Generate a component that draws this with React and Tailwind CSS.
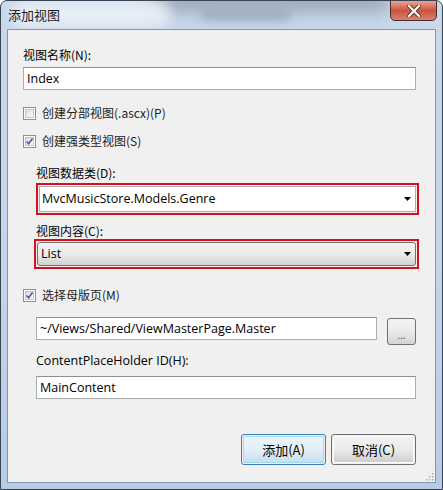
import React from "react";

const latin = { fontFamily: '"Open Sans", "Noto Sans CJK SC", sans-serif' };
const cjk = { fontFamily: '"Noto Sans CJK SC", "Open Sans", sans-serif' };

function Checkbox({ checked }) {
  return (
    <div className="w-[13px] h-[13px] border border-[#8f8f8f] bg-white p-[1px] shrink-0">
      <div className="w-full h-full border border-[#c6c6c6] bg-gradient-to-br from-[#dcdcdc] to-[#fbfbfb] relative">
        {checked && (
          <svg viewBox="0 0 9 9" className="absolute left-[-1px] top-[-1px] w-[9px] h-[9px]">
            <path d="M1.5 4.5 L3.6 6.8 L7.6 1.6" stroke="#4a5e95" strokeWidth="1.6" fill="none" />
          </svg>
        )}
      </div>
    </div>
  );
}

function Arrow() {
  return (
    <svg viewBox="0 0 7 4" className="w-[7px] h-[4px]">
      <path d="M0 0 H7 L3.5 4 Z" fill="#000" />
    </svg>
  );
}

function Button({ children, primary }) {
  return (
    <div
      className={
        "w-[85px] h-[31px] rounded-[3px] border p-[1px] " +
        (primary ? "border-[#3c7fb1]" : "border-[#707070]")
      }
    >
      <div
        className={
          "w-full h-full rounded-[2px] flex items-center justify-center text-[13px] leading-[16px] text-black " +
          (primary
            ? "bg-gradient-to-b from-[#eaf6fd] via-[#e3eef7] to-[#c8dff0] border border-[#a6d7f3]"
            : "bg-gradient-to-b from-[#f2f2f2] via-[#ebebeb] to-[#cfcfcf] border border-[#fcfcfc]")
        }
        style={cjk}
      >
        {children}
      </div>
    </div>
  );
}

export default function App() {
  return (
    <div className="w-[443px] h-[490px] relative overflow-hidden rounded-t-[7px] border border-[#3a4450] bg-gradient-to-b from-[#c9d9ea] via-[#c4d6eb] to-[#b6cce6] flex flex-col leading-[16px]">
      {/* aero blur hints */}
      <div className="absolute left-[150px] top-[-14px] w-[240px] h-[26px] rounded-full bg-[#5b6b7d] opacity-40 blur-[8px]" />
      <div className="absolute left-[10px] top-[0px] w-[160px] h-[26px] rounded-full bg-[#eef3f8] opacity-80 blur-[6px]" />
      <div className="absolute left-[200px] top-[10px] w-[90px] h-[10px] rounded-full bg-[#8596aa] opacity-50 blur-[4px]" />

      {/* title bar */}
      <div className="relative h-[28px] flex items-start justify-between shrink-0">
        <div className="pl-[7px] pt-[5px] text-[13px] text-[#1a1a1a] leading-[18px]" style={cjk}>
          添加视图
        </div>
        <div className="mr-[5px] mt-[-1px] w-[47px] h-[21px] rounded-b-[5px] border border-[#4a2d28] bg-gradient-to-b from-[#e8a495] via-[#c9533f] to-[#d9806e] flex items-center justify-center">
          <svg viewBox="0 0 14 12" className="w-[14px] h-[12px]">
            <path d="M2 1 L12 11 M12 1 L2 11" stroke="#5a2a22" strokeWidth="4" strokeLinecap="square" />
            <path d="M2 1 L12 11 M12 1 L2 11" stroke="#ffffff" strokeWidth="2.2" strokeLinecap="square" />
          </svg>
        </div>
      </div>

      {/* client area */}
      <div className="relative mx-[6px] mb-[6px] flex-1 border border-[#8496ad] bg-[#f0f0f0] flex flex-col pl-[15px] pr-[19px] text-[12px] leading-[16px] text-black" style={cjk}>
        <div className="mt-[17px] h-[16px]">视图名称(N):</div>
        <div className="mt-[4px] h-[23px] border border-[#abadb3] border-t-[#8e8f8f] bg-white flex items-center pl-[3px] text-[12.5px]" style={latin}>
          Index
        </div>

        <div className="mt-[15px] flex items-center h-[16px]">
          <Checkbox />
          <span className="ml-[6px] text-[#222]">创建分部视图(.ascx)(P)</span>
        </div>
        <div className="mt-[12px] flex items-center h-[16px]">
          <Checkbox checked />
          <span className="ml-[6px] text-[#222]">创建强类型视图(S)</span>
        </div>

        <div className="pl-[13px] flex flex-col">
          <div className="mt-[16px] h-[16px]">视图数据类(D):</div>
          <div className="mt-[2px] mr-[-3px] h-[32px] border-2 border-[#d6101c] p-[1px]">
            <div className="h-full border border-[#abadb3] bg-white flex items-center justify-between pl-[2px] pr-[4px] text-[12.5px]" style={latin}>
              <span>MvcMusicStore.Models.Genre</span>
              <Arrow />
            </div>
          </div>

          <div className="mt-[8px] h-[16px]">视图内容(C):</div>
          <div className="mt-[0px] ml-[-2px] mr-[-3px] h-[30px] border-2 border-[#d6101c] p-[1px] pl-[1px]">
            <div className="h-full rounded-[3px] border border-[#707070] bg-gradient-to-b from-[#f2f2f2] via-[#ebebeb] to-[#d3d3d3] flex items-center justify-between pl-[3px] pr-[4px] text-[12.5px]" style={latin}>
              <span>List</span>
              <Arrow />
            </div>
          </div>
        </div>

        <div className="mt-[18px] flex items-center h-[16px]">
          <Checkbox checked />
          <span className="ml-[6px] text-[#222]">选择母版页(M)</span>
        </div>

        <div className="pl-[13px] flex flex-col">
          <div className="mt-[14px] h-[23px] flex items-start gap-[10px]">
            <div className="flex-1 h-[23px] border border-[#abadb3] border-t-[#8e8f8f] bg-white flex items-center pl-[3px] text-[12.5px]" style={latin}>
              ~/Views/Shared/ViewMasterPage.Master
            </div>
            <div className="w-[29px] h-[27px] shrink-0 mt-[1px] rounded-[3px] border border-[#707070] bg-gradient-to-b from-[#f2f2f2] via-[#ebebeb] to-[#d3d3d3] flex items-end justify-center pb-[4px] text-[10px] leading-[10px] text-[#444]" style={latin}>
              ...
            </div>
          </div>
          <div className="mt-[13px] h-[16px] text-[12.5px]" style={latin}>ContentPlaceHolder ID(H):</div>
          <div className="mt-[7px] h-[23px] border border-[#abadb3] border-t-[#8e8f8f] bg-white flex items-center pl-[3px] text-[12.5px]" style={latin}>
            MainContent
          </div>
        </div>

        <div className="mt-[35px] flex justify-end gap-[5px]">
          <Button primary>添加(A)</Button>
          <Button>取消(C)</Button>
        </div>

        {/* size grip */}
        <svg viewBox="0 0 10 10" className="absolute right-[1px] bottom-[1px] w-[10px] h-[10px]">
          {[[8, 2], [8, 5], [5, 5], [8, 8], [5, 8], [2, 8]].map(([x, y], i) => (
            <rect key={i} x={x} y={y} width="1.5" height="1.5" fill="#b0b0b0" />
          ))}
        </svg>
      </div>
    </div>
  );
}
